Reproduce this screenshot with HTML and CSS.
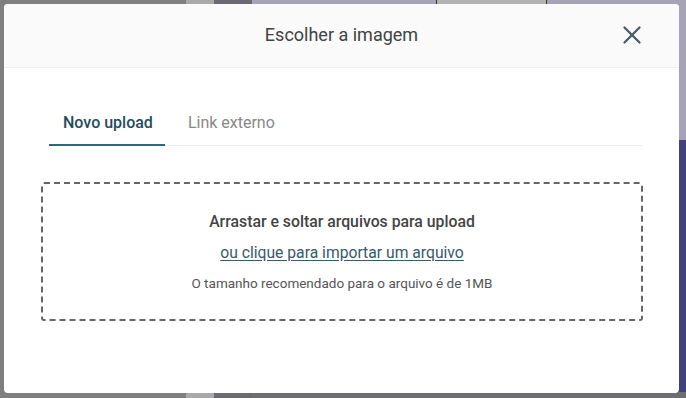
FILE: index.html
```html
<!DOCTYPE html>
<html lang="pt">
<head>
<meta charset="utf-8">
<link rel="stylesheet" href="styles.css">
</head>
<body>
<div class="backdrop">
  <div class="bg bg-a"></div>
  <div class="bg bg-b"></div>
  <div class="bg bg-c"></div>
  <div class="bg bg-d"></div>
  <div class="bg bg-e"></div>
  <div class="bg bg-f"></div>
</div>
<div class="modal">
  <div class="modal-header">
    <h1 class="modal-title">Escolher a imagem</h1>
    <button class="close" aria-label="Fechar">
      <svg width="18" height="18" viewBox="0 0 18 18"><path d="M1.5 1.5 L16.5 16.5 M16.5 1.5 L1.5 16.5" stroke="#455a64" stroke-width="2.2" stroke-linecap="round" fill="none"/></svg>
    </button>
  </div>
  <div class="modal-body">
    <div class="tabs">
      <div class="tab active">Novo upload</div>
      <div class="tab">Link externo</div>
    </div>
    <div class="dropzone">
      <p class="dz-title">Arrastar e soltar arquivos para upload</p>
      <a class="dz-link" href="#">ou clique para importar um arquivo</a>
      <p class="dz-note">O tamanho recomendado para o arquivo é de 1MB</p>
    </div>
  </div>
</div>
</body>
</html>
```
FILE: styles.css
```css
* { box-sizing: border-box; }
html, body { margin: 0; padding: 0; }
body {
  width: 686px;
  height: 398px;
  overflow: hidden;
  background: #7f7f7f;
  font-family: Roboto, "Liberation Sans", sans-serif;
  position: relative;
  padding: 4px 7px 5px 4px;
}
.backdrop { position: absolute; inset: 0; }
.bg { position: absolute; }
.bg-a { left: 186px; top: 0; width: 28px; height: 398px; background: #a9a9a9; }
.bg-b { left: 214px; top: 0; width: 38px; height: 398px; background: #6b6a70; }
.bg-c { left: 252px; top: 0; width: 434px; height: 140px; background: #a7a3b6; }
.bg-d { left: 436px; top: 0; width: 111px; height: 6px; background: #b3b3b3; border-left: 1px solid #333; border-right: 1px solid #333; }
.bg-e { left: 252px; top: 140px; width: 434px; height: 258px; background: #43417a; }
.bg-f { left: 252px; top: 392px; width: 434px; height: 6px; background: #6e6d74; }
.modal {
  position: relative;
  width: 675px;
  height: 389px;
  background: #fff;
  border-radius: 4px;
  overflow: hidden;
}
.modal-header {
  height: 64px;
  background: #fafafa;
  border-bottom: 1px solid #efefef;
  display: flex;
  align-items: center;
  justify-content: center;
  position: relative;
}
.modal-title {
  margin: 0 0 3px;
  font-size: 18px;
  font-weight: 400;
  color: #424242;
}
.close {
  position: absolute;
  right: 38px;
  top: 22px;
  border: 0;
  background: none;
  padding: 0;
  width: 18px;
  height: 18px;
  display: flex;
}
.modal-body { padding: 37px 36px 0 37px; }
.tabs {
  display: flex;
  border-bottom: 1px solid #ececec;
  margin-left: 8px;
  margin-right: 1px;
}
.tab {
  font-size: 16px;
  padding: 8px 12px 12px 14px;
  color: #888;
  margin-right: 9px;
}
.tab.active {
  color: #1f4e5c;
  font-weight: 500;
  border-bottom: 2px solid #2a6a7a;
  margin-bottom: -1px;
}
.dropzone {
  margin-top: 36px;
  height: 139px;
  border: 2px dashed #666;
  border-radius: 3px;
  display: flex;
  flex-direction: column;
  align-items: center;
  padding-top: 28px;
}
.dz-title {
  margin: 0;
  font-size: 15.8px;
  font-weight: 500;
  color: #444;
}
.dz-link {
  margin-top: 12px;
  font-size: 15.7px;
  color: #37596a;
  text-decoration: underline;
  text-underline-offset: 2px;
}
.dz-note {
  margin: 13px 0 0;
  font-size: 13.5px;
  color: #555;
}
```
